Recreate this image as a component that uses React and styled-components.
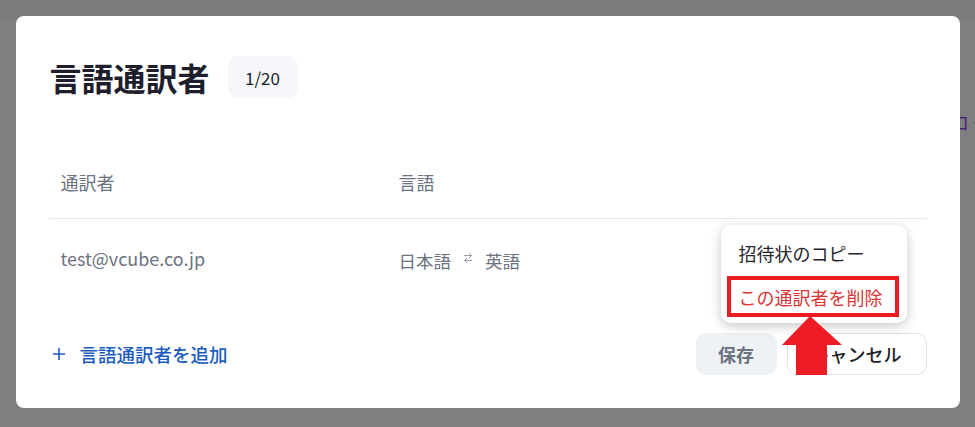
import React from "react";
import styled, { createGlobalStyle } from "styled-components";

const GlobalStyle = createGlobalStyle`
  body {
    margin: 0;
    font-family: "Noto Sans CJK JP", "Noto Sans", sans-serif;
    background: #ffffff;
  }
`;

const Page = styled.div`
  width: 100%;
  height: 427px;
  overflow: hidden;
  background: #ffffff;
`;

const TopBar = styled.div`
  height: 19px;
  background: #f6f6f6;
  border-bottom: 1px solid #ffffff;
`;

const BackRow = styled.div`
  display: flex;
  justify-content: flex-end;
  margin-top: 89px;
  margin-right: -20px;
`;

const BackLink = styled.span`
  color: #9b45e8;
  font-size: 18px;
  letter-spacing: 4px;
`;

const Overlay = styled.div`
  position: fixed;
  inset: 0;
  background-color: rgba(0, 0, 0, 0.5);
  display: flex;
  align-items: flex-start;
  justify-content: center;
  padding-top: 16px;
`;

const Modal = styled.div`
  position: relative;
  width: 944px;
  height: 392px;
  box-sizing: border-box;
  background: #ffffff;
  border-radius: 8px;
  padding: 40px 33px 33px 33px;
  display: flex;
  flex-direction: column;
`;

const TitleRow = styled.div`
  display: flex;
  align-items: center;
  gap: 18px;
`;

const Title = styled.h2`
  margin: 0;
  font-size: 32px;
  line-height: 42px;
  font-weight: 700;
  color: #1e1e2c;
  padding-left: 1px;
`;

const CountBadge = styled.div`
  width: 70px;
  height: 42px;
  border-radius: 10px;
  background: #f5f7fa;
  display: flex;
  align-items: center;
  justify-content: center;
  font-size: 17px;
  color: #23232e;
`;

const Table = styled.div`
  margin-top: 48px;
`;

const Row = styled.div`
  display: grid;
  grid-template-columns: 338px 1fr;
  align-items: center;
  height: ${(props) => props.height}px;
  border-bottom: ${(props) => (props.divider ? "1px solid #e6e8ee" : "none")};
`;

const HeadCell = styled.div`
  padding: 0 12px;
  font-size: 18px;
  color: #6b7280;
`;

const EmailCell = styled.div`
  padding: 0 12px;
  font-size: 18px;
  color: #6b7280;
`;

const LangCell = styled.div`
  padding: 5px 12px 0 12px;
  display: flex;
  align-items: center;
  gap: 12px;
  font-size: 17.5px;
  color: #6b7280;
`;

const SwapIcon = styled.svg`
  width: 10px;
  height: 12px;
  margin-top: -6px;
`;

const Footer = styled.div`
  margin-top: auto;
  display: flex;
  align-items: center;
  justify-content: space-between;
`;

const AddLink = styled.button`
  display: flex;
  align-items: center;
  gap: 15px;
  border: 0;
  background: transparent;
  padding: 0 0 0 4px;
  font: inherit;
  font-size: 18.5px;
  font-weight: 500;
  color: #1a5cbf;
`;

const Actions = styled.div`
  display: flex;
  gap: 10px;
`;

const SaveButton = styled.button`
  width: 81px;
  height: 42px;
  border: 0;
  border-radius: 10px;
  background: #eff2f5;
  font: inherit;
  font-size: 18px;
  font-weight: 700;
  color: #6b7280;
`;

const CancelButton = styled.button`
  width: 140px;
  height: 42px;
  border: 1px solid #dfe3e8;
  border-radius: 10px;
  background: #ffffff;
  font: inherit;
  font-size: 18px;
  font-weight: 500;
  color: #1f1f29;
`;

const Menu = styled.div`
  position: absolute;
  left: 705px;
  top: 209px;
  width: 186px;
  box-sizing: border-box;
  padding: 6px 8px 6px 6px;
  background: #ffffff;
  border-radius: 10px;
  box-shadow: 0 3px 12px rgba(0, 0, 0, 0.22);
  display: flex;
  flex-direction: column;
  gap: 1px;
`;

const MenuItem = styled.div`
  height: ${(props) => (props.danger ? 33 : 44)}px;
  display: flex;
  align-items: center;
  padding-left: ${(props) => (props.danger ? 8 : 12)}px;
  font-size: 18px;
  color: ${(props) => (props.danger ? "#dc3535" : "#26262f")};
  border: ${(props) => (props.highlight ? "4px solid #ed1c24" : "0")};
`;

const PointerArrow = styled.svg`
  position: absolute;
  left: 766px;
  top: 300px;
  width: 62px;
  height: 59px;
`;

const interpreters = [
  { email: "test@vcube.co.jp", from: "日本語", to: "英語" },
];

const App = () => {
  return (
    <>
      <GlobalStyle />
      <Page>
        <TopBar />
        <BackRow>
          <BackLink>ログ</BackLink>
        </BackRow>
      </Page>
      <Overlay>
        <Modal>
          <TitleRow>
            <Title>言語通訳者</Title>
            <CountBadge>1/20</CountBadge>
          </TitleRow>
          <Table>
            <Row height={72} divider>
              <HeadCell>通訳者</HeadCell>
              <HeadCell>言語</HeadCell>
            </Row>
            {interpreters.map((item) => (
              <Row height={78} key={item.email}>
                <EmailCell>{item.email}</EmailCell>
                <LangCell>
                  <span>{item.from}</span>
                  <SwapIcon viewBox="0 0 10 12" fill="none" stroke="#9aa0aa" strokeWidth="1">
                    <path d="M1 3.5 H8.5 M6 1 L8.5 3.5 L6 6" />
                    <path d="M9 8.5 H1.5 M4 6 L1.5 8.5 L4 11" />
                  </SwapIcon>
                  <span>{item.to}</span>
                </LangCell>
              </Row>
            ))}
          </Table>
          <Footer>
            <AddLink>
              <svg width="12" height="12" viewBox="0 0 12 12" stroke="#1a5cbf" strokeWidth="1.6">
                <path d="M6 0 V12 M0 6 H12" />
              </svg>
              言語通訳者を追加
            </AddLink>
            <Actions>
              <SaveButton>保存</SaveButton>
              <CancelButton>キャンセル</CancelButton>
            </Actions>
          </Footer>
          <Menu>
            <MenuItem>招待状のコピー</MenuItem>
            <MenuItem danger highlight>
              この通訳者を削除
            </MenuItem>
          </Menu>
          <PointerArrow viewBox="0 0 62 59">
            <polygon points="28,0 60,29 45,29 45,59 14,59 14,29 0,29" fill="#ed1c24" />
          </PointerArrow>
        </Modal>
      </Overlay>
    </>
  );
};

export default App;
